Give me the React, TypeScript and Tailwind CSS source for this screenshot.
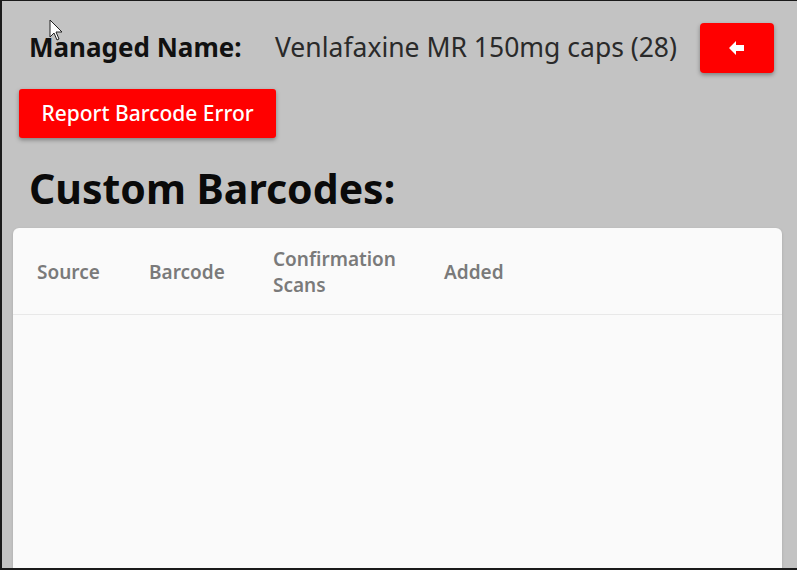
import React from "react"

const font = { fontFamily: '"Noto Sans", "Open Sans", sans-serif' }

function Cursor() {
  return (
    <svg className="absolute left-[47px] top-[18px]" width="16" height="24" viewBox="0 0 16 24">
      <path d="M1 1 L1 18 L5 14 L8 21 L10 20 L7 13 L13 13 Z" fill="#fff" stroke="#222" strokeWidth="1" strokeLinejoin="round" />
    </svg>
  )
}

function ArrowLeft() {
  return (
    <svg width="16" height="14" viewBox="0 0 16 14">
      <path d="M0 7 L7 0 L7 4 L15 4 L15 10 L7 10 L7 14 Z" fill="#fff" />
    </svg>
  )
}

const headers = [
  { label: "Source", w: "w-[112px]" },
  { label: "Barcode", w: "w-[124px]" },
  { label: "Confirmation Scans", w: "w-[171px]" },
  { label: "Added", w: "w-[120px]" },
]

export default function App() {
  return (
    <div
      className="relative w-[797px] h-[570px] overflow-hidden bg-[#c3c3c3] border-t border-l-2 border-b-2 border-[#1a1a1a]"
      style={font}
    >
      <Cursor />
      <div className="flex items-center pl-[27px] pr-[23px] pt-[21px] h-[72px]">
        <span className="text-[26px] font-bold text-[#111] w-[246px] whitespace-nowrap">Managed Name:</span>
        <span className="text-[26.5px] text-[#2a2a2a] flex-1 whitespace-nowrap">Venlafaxine MR 150mg caps (28)</span>
        <button className="w-[74px] h-[50px] rounded-[4px] bg-[#ff0000] flex items-center justify-center shadow-[0_2px_4px_rgba(0,0,0,0.35)]">
          <ArrowLeft />
        </button>
      </div>
      <div className="pl-[17px] pt-[16px]">
        <button className="w-[257px] h-[49px] rounded-[3px] bg-[#ff0000] text-white text-[21px] font-medium shadow-[0_2px_4px_rgba(0,0,0,0.35)]">
          Report Barcode Error
        </button>
      </div>
      <h1 className="pl-[27px] pt-[26px] text-[41px] leading-[48px] font-bold text-[#0a0a0a]">Custom Barcodes:</h1>
      <div className="ml-[11px] mr-[15px] mt-[16px] h-[400px] rounded-t-[6px] bg-[#fafafa] shadow-[0_1px_3px_rgba(0,0,0,0.15)]">
        <div className="flex items-center h-[87px] pt-[2px] pl-[24px] border-b border-[#e8e8e8]">
          {headers.map((h) => (
            <div key={h.label} className={`${h.w} text-[19px] leading-[26px] font-semibold text-[#7a7a7a]`}>
              {h.label === "Confirmation Scans" ? (
                <>
                  Confirmation
                  <br />
                  Scans
                </>
              ) : (
                h.label
              )}
            </div>
          ))}
        </div>
      </div>
    </div>
  )
}
